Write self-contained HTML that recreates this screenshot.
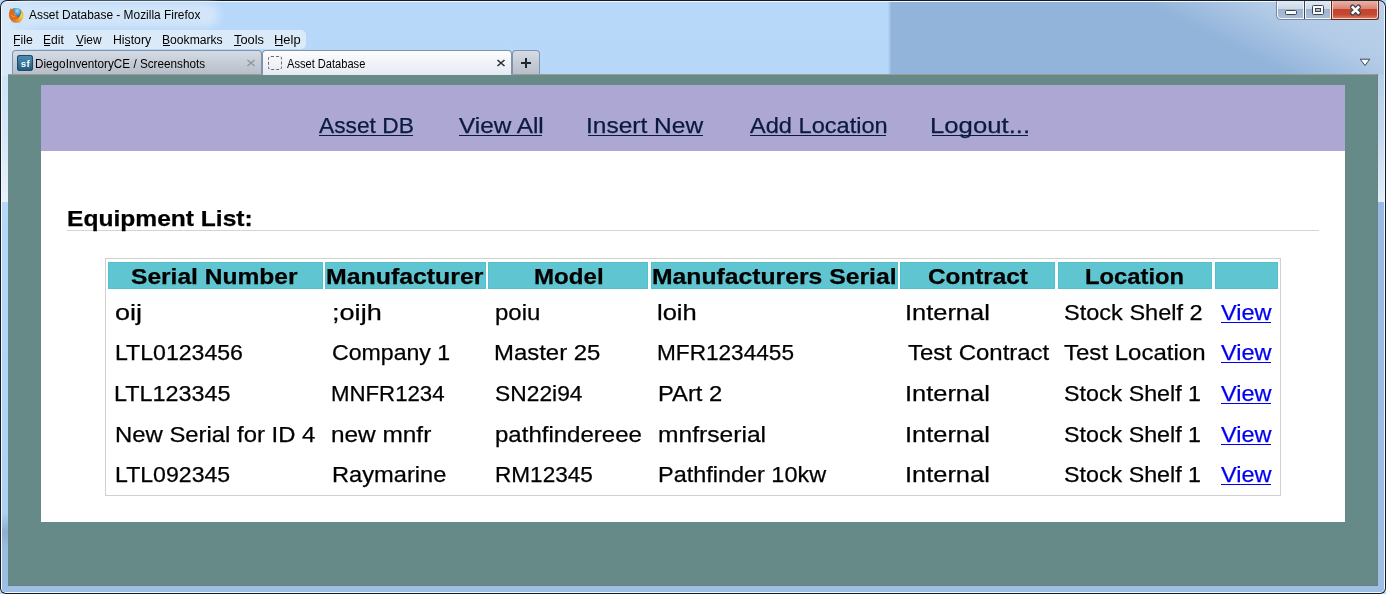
<!DOCTYPE html>
<html><head><meta charset="utf-8"><style>
html,body{margin:0;padding:0;}
body{width:1386px;height:594px;overflow:hidden;position:relative;font-family:"Liberation Sans",sans-serif;background:#b7d7f9;}
.a{position:absolute;}
.t{position:absolute;white-space:nowrap;transform-origin:0 0;-webkit-text-stroke:0.25px currentColor;}
.bm{display:inline-block;width:0;height:0;}
</style></head><body>
<!-- window frame background -->
<div class="a" style="left:0;top:0;width:1386px;height:594px;background:#111c28;border-radius:7px 7px 6px 6px;"></div>
<div class="a" style="left:1px;top:1px;width:1384px;height:592px;background:#f4f9fd;border-radius:6px 6px 5px 5px;"></div>
<div class="a" style="left:2px;top:2px;width:1382px;height:590px;border-radius:5px 5px 4px 4px;overflow:hidden;background:linear-gradient(180deg,#b8d8fa 0,#b7d7f9 200px,#a9c9ee 420px,#9dbfe4 594px);">
  <div class="a" style="left:1376px;top:72px;width:6px;height:128px;background:linear-gradient(180deg,#b6cee9 0,#c4d9ef 60px,#e2eef9 128px);"></div><div class="a" style="left:1376px;top:200px;width:6px;height:390px;background:linear-gradient(180deg,#98bbe3 0,#9dbfe4 390px);"></div>
  <div class="a" style="left:888px;top:0;width:496px;height:72px;background:linear-gradient(26.6deg,#92b4da 0,#92b4da 62%,#b3cbe7 80%,#bcd2ea 100%);"></div>
  <div class="a" style="left:886px;top:0;width:4px;height:72px;background:linear-gradient(90deg,#b5d6f8,#8caed6);"></div>
  <div class="a" style="left:0;top:0;width:40px;height:74px;background:linear-gradient(90deg,#d8e8f8 0,#d8e8f8 6px,rgba(184,216,250,0) 40px);"></div><div class="a" style="left:0;top:74px;width:6px;height:128px;background:linear-gradient(180deg,#cfe3f7 0,#d6e7f8 60px,#eaf2fb 128px);"></div><div class="a" style="left:0;top:200px;width:6px;height:390px;background:linear-gradient(180deg,#b7d7f9 0,#afd0f5 310px,#8fadd0 330px,#9bbbe0 345px,#9dbfe4 390px);"></div>
</div>
<!-- title glow -->
<div class="a" style="left:14px;top:3px;width:205px;height:24px;border-radius:12px;background:#d3e6f9;filter:blur(4px);"></div>
<!-- firefox icon -->
<svg class="a" style="left:8px;top:7px" width="16" height="16" viewBox="0 0 16 16">
  <defs>
    <radialGradient id="or" cx="0.8" cy="0.5" r="0.85"><stop offset="0" stop-color="#ffd84a"/><stop offset="0.35" stop-color="#f7a92e"/><stop offset="1" stop-color="#cf4c18"/></radialGradient>
    <radialGradient id="bl" cx="0.55" cy="0.3" r="0.7"><stop offset="0" stop-color="#9be6fb"/><stop offset="0.6" stop-color="#3d94d6"/><stop offset="1" stop-color="#1b4f9a"/></radialGradient>
  </defs>
  <ellipse cx="8.3" cy="15.3" rx="5" ry="0.7" fill="#8ea9c4" opacity="0.5"/>
  <circle cx="8.3" cy="8.4" r="7.2" fill="url(#or)"/>
  <path d="M4.5 1.8 C7 0.4 10.8 0.6 12.6 2.8 C13.6 4.4 13.2 7.6 11.6 9.4 C10.2 10.8 8 11 7 9.8 C7.8 9 8.2 8.2 7.8 7.2 C6.8 7.4 5.8 6.8 6 5.8 C5.2 5.2 4.6 3.6 4.5 1.8 Z" fill="url(#bl)"/>
  <path d="M1.1 7.2 C1.1 4.6 1.8 2.3 2.9 0.9 C3.3 2 4 2.6 5 2.5 C6.2 3.2 7 4.3 6.8 5.4 C6 5.4 5.4 5.9 5.6 6.7 C6.2 7.6 7.2 8.3 8.2 8.1 C8.8 9.5 10.2 10.3 11.6 9.7 C10.6 11.8 8.6 12.8 6.6 12.6 C3.4 12.3 1.1 10.2 1.1 7.2 Z" fill="#e06a1c"/>
  <path d="M3 8 C4.2 9.2 5.8 9.8 7.3 9.7" stroke="#f6b545" stroke-width="0.9" fill="none" opacity="0.8"/>
</svg>
<!-- window controls -->
<svg class="a" style="left:1276px;top:0" width="104" height="21" viewBox="0 0 104 21">
  <defs>
    <linearGradient id="bg1" x1="0" y1="0" x2="0" y2="1"><stop offset="0" stop-color="#e2eaf4"/><stop offset="0.45" stop-color="#ccd9e9"/><stop offset="0.47" stop-color="#9eb3ce"/><stop offset="1" stop-color="#a9bdd7"/></linearGradient>
    <linearGradient id="bg2" x1="0" y1="0" x2="0" y2="1"><stop offset="0" stop-color="#eeb0a4"/><stop offset="0.45" stop-color="#d98676"/><stop offset="0.47" stop-color="#c5422b"/><stop offset="0.8" stop-color="#c24a33"/><stop offset="1" stop-color="#d2765f"/></linearGradient>
  </defs>
  <path d="M0.5 0 V15.5 Q0.5 19.5 4.5 19.5 H102.5 V0" fill="#3b4757"/>
  <path d="M1 0 H28 V19 H4.5 Q1 19 1 15.5 Z" fill="#f2f6fb"/>
  <path d="M2 1 H27 V18 H5 Q2 18 2 15 Z" fill="url(#bg1)"/>
  <rect x="28" y="0" width="1" height="19" fill="#3b4757"/>
  <rect x="29" y="0" width="26" height="19" fill="#f2f6fb"/>
  <rect x="30" y="1" width="24" height="17" fill="url(#bg1)"/>
  <rect x="55" y="0" width="1" height="20" fill="#6e2414"/>
  <path d="M55 0 H103 V16 Q103 20 99 20 H55 Z" fill="#6e2414"/>
  <path d="M56 0 H102 V16 Q102 19 99 19 H56 Z" fill="#f4d2c8"/>
  <path d="M57 1 H101 V15.5 Q101 18 98.5 18 H57 Z" fill="url(#bg2)"/>
  <rect x="9.5" y="10.5" width="11" height="4" rx="1" fill="#fbfbfb" stroke="#3b4553" stroke-width="1"/>
  <rect x="36.5" y="5.5" width="11" height="9" rx="1" fill="#fbfbfb" stroke="#3b4553" stroke-width="1"/>
  <rect x="39.5" y="8.5" width="5" height="3" fill="#a9bdd6" stroke="#3b4553" stroke-width="1"/>
  <rect x="0" y="0" width="104" height="1" fill="#1b2633"/>
  <path d="M76.5 7 L82.5 13 M82.5 7 L76.5 13" stroke="#3c4552" stroke-width="5" stroke-linecap="round"/>
  <path d="M76.8 7.3 L82.2 12.7 M82.2 7.3 L76.8 12.7" stroke="#fff" stroke-width="2.6" stroke-linecap="square"/>
</svg>
<!-- menubar -->
<div class="a" style="left:8px;top:30px;width:298px;height:19px;border-radius:5px;background:#dbeaf9;"></div>
<!-- tabs -->
<div class="a" style="left:12px;top:50px;width:250px;height:25px;border-radius:4px 4px 0 0;background:#7f93ab;"></div>
<div class="a" style="left:13px;top:51px;width:248px;height:23px;border-radius:3px 3px 0 0;background:linear-gradient(180deg,#d6dce5 0,#c6ccd6 50%,#b8bfca 100%);"></div>
<div class="a" style="left:262px;top:50px;width:250px;height:25px;border-radius:4px 4px 0 0;background:#7f93ab;"></div>
<div class="a" style="left:263px;top:51px;width:248px;height:24px;border-radius:3px 3px 0 0;background:linear-gradient(180deg,#fdfdfe 0,#eef1f7 60%,#e6ebf3 100%);"></div>
<div class="a" style="left:512px;top:50px;width:28px;height:25px;border-radius:4px 4px 0 0;background:#7f93ab;"></div>
<div class="a" style="left:513px;top:51px;width:26px;height:23px;border-radius:3px 3px 0 0;background:linear-gradient(180deg,#d6dce5 0,#c6ccd6 50%,#b8bfca 100%);"></div>
<!-- sf icon -->
<div class="a" style="left:17px;top:55px;width:16px;height:16px;border-radius:3px;background:linear-gradient(180deg,#4f8fb6,#22587c);box-shadow:inset 0 0 0 1px #1d4a69;"></div>
<div class="a" style="left:18px;top:58px;width:15px;text-align:center;font:bold 9.5px/11px 'Liberation Sans',sans-serif;color:#fff;letter-spacing:0.6px;">sf</div>
<!-- dashed favicon -->
<div class="a" style="left:268px;top:56px;width:12px;height:12px;border:1px dashed #6a6a6a;border-radius:3px;"></div>
<!-- tab close -->
<svg class="a" style="left:246px;top:59px" width="10" height="8" viewBox="0 0 10 8"><path d="M1.5 1 L8.5 7 M8.5 1 L1.5 7" stroke="#8f949b" stroke-width="1.4"/></svg>
<svg class="a" style="left:496px;top:59px" width="10" height="8" viewBox="0 0 10 8"><path d="M1.5 1 L8.5 7 M8.5 1 L1.5 7" stroke="#2b2f35" stroke-width="1.6"/></svg>
<!-- new tab plus -->
<div class="a" style="left:521px;top:62px;width:10px;height:2px;background:#1f262d;"></div>
<div class="a" style="left:525px;top:58px;width:2px;height:10px;background:#1f262d;"></div>
<!-- dropdown -->
<svg class="a" style="left:1359px;top:58px" width="12" height="9" viewBox="0 0 12 9"><path d="M1.2 1.2 L10.8 1.2 L6 7.5 Z" fill="#fff" stroke="#3a4656" stroke-width="1"/></svg>
<!-- content area -->
<div class="a" style="left:8px;top:74px;width:1370px;height:512px;background:#668a87;"></div>
<div class="a" style="left:8px;top:74px;width:1370px;height:1px;background:#9e9a96;"></div>
<div class="a" style="left:1377px;top:74px;width:1px;height:512px;background:#6f7f86;"></div>
<div class="a" style="left:8px;top:585px;width:1370px;height:1px;background:#677e88;"></div>
<!-- page -->
<div class="a" style="left:41px;top:85px;width:1304px;height:66px;background:#ada7d4;"></div>
<div class="a" style="left:41px;top:151px;width:1304px;height:371px;background:#fff;"></div>
<div class="a" style="left:67px;top:230px;width:1252px;height:1px;background:#d4d4d4;"></div>
<div class="a" style="left:105px;top:258px;width:1174px;height:236px;border:1px solid #d0d0d0;"></div>
<div class="a" style="left:108px;top:262px;width:215px;height:27px;background:#5fc5d1;box-shadow:inset 0 0 0 1px #53c0cd;"></div>
<div class="a" style="left:325px;top:262px;width:161px;height:27px;background:#5fc5d1;box-shadow:inset 0 0 0 1px #53c0cd;"></div>
<div class="a" style="left:488px;top:262px;width:160px;height:27px;background:#5fc5d1;box-shadow:inset 0 0 0 1px #53c0cd;"></div>
<div class="a" style="left:651px;top:262px;width:247px;height:27px;background:#5fc5d1;box-shadow:inset 0 0 0 1px #53c0cd;"></div>
<div class="a" style="left:900px;top:262px;width:155px;height:27px;background:#5fc5d1;box-shadow:inset 0 0 0 1px #53c0cd;"></div>
<div class="a" style="left:1058px;top:262px;width:154px;height:27px;background:#5fc5d1;box-shadow:inset 0 0 0 1px #53c0cd;"></div>
<div class="a" style="left:1215px;top:262px;width:63px;height:27px;background:#5fc5d1;box-shadow:inset 0 0 0 1px #53c0cd;"></div>
<div class="a" style="left:263px;top:74px;width:248px;height:1px;background:#e4e9f1;"></div>

<div class="t" style="left:29.40px;top:9.00px;font-size:12.5px;line-height:12.5px;font-weight:400;color:#000;-webkit-text-stroke:0;transform:scaleX(0.9523)">Asset Database - Mozilla Firefox<span class="bm"></span></div>
<div class="t" style="left:13.10px;top:34.00px;font-size:12.5px;line-height:12.5px;font-weight:400;color:#000;-webkit-text-stroke:0;transform:scaleX(0.9839)">File<span class="bm"></span></div>
<div class="t" style="left:43.15px;top:34.00px;font-size:12.5px;line-height:12.5px;font-weight:400;color:#000;-webkit-text-stroke:0;transform:scaleX(0.9689)">Edit<span class="bm"></span></div>
<div class="t" style="left:76.21px;top:34.00px;font-size:12.5px;line-height:12.5px;font-weight:400;color:#000;-webkit-text-stroke:0;transform:scaleX(0.9506)">View<span class="bm"></span></div>
<div class="t" style="left:113.46px;top:34.00px;font-size:12.5px;line-height:12.5px;font-weight:400;color:#000;-webkit-text-stroke:0;transform:scaleX(0.9809)">History<span class="bm"></span></div>
<div class="t" style="left:162.07px;top:34.00px;font-size:12.5px;line-height:12.5px;font-weight:400;color:#000;-webkit-text-stroke:0;transform:scaleX(0.9705)">Bookmarks<span class="bm"></span></div>
<div class="t" style="left:234.10px;top:34.00px;font-size:12.5px;line-height:12.5px;font-weight:400;color:#000;-webkit-text-stroke:0;transform:scaleX(1.0277)">Tools<span class="bm"></span></div>
<div class="t" style="left:274.02px;top:34.00px;font-size:12.5px;line-height:12.5px;font-weight:400;color:#000;-webkit-text-stroke:0;transform:scaleX(1.0342)">Help<span class="bm"></span></div>
<div class="t" style="left:35.48px;top:58.00px;font-size:12.5px;line-height:12.5px;font-weight:400;color:#000;-webkit-text-stroke:0;transform:scaleX(0.9379)">DiegoInventoryCE / Screenshots<span class="bm"></span></div>
<div class="t" style="left:286.70px;top:58.00px;font-size:12.5px;line-height:12.5px;font-weight:400;color:#000;-webkit-text-stroke:0;transform:scaleX(0.8873)">Asset Database<span class="bm"></span></div>
<div class="t" style="left:319.10px;top:115.01px;font-size:22.5px;line-height:22.5px;font-weight:400;color:#0b1a40;transform:scaleX(1.0112)">Asset DB<span class="bm"></span></div>
<div class="t" style="left:459.21px;top:115.01px;font-size:22.5px;line-height:22.5px;font-weight:400;color:#0b1a40;transform:scaleX(1.0811)">View All<span class="bm"></span></div>
<div class="t" style="left:585.91px;top:115.01px;font-size:22.5px;line-height:22.5px;font-weight:400;color:#0b1a40;transform:scaleX(1.0887)">Insert New<span class="bm"></span></div>
<div class="t" style="left:750.21px;top:115.01px;font-size:22.5px;line-height:22.5px;font-weight:400;color:#0b1a40;transform:scaleX(1.0485)">Add Location<span class="bm"></span></div>
<div class="t" style="left:929.87px;top:115.01px;font-size:22.5px;line-height:22.5px;font-weight:400;color:#0b1a40;transform:scaleX(1.1429)">Logout...<span class="bm"></span></div>
<div class="t" style="left:66.90px;top:208.01px;font-size:22.5px;line-height:22.5px;font-weight:700;color:#000;transform:scaleX(1.0925)">Equipment List:<span class="bm"></span></div>
<div class="t" style="left:131.44px;top:266.01px;font-size:22.5px;line-height:22.5px;font-weight:700;color:#000;transform:scaleX(1.0916)">Serial Number<span class="bm"></span></div>
<div class="t" style="left:326.39px;top:266.01px;font-size:22.5px;line-height:22.5px;font-weight:700;color:#000;transform:scaleX(1.1048)">Manufacturer<span class="bm"></span></div>
<div class="t" style="left:533.62px;top:266.01px;font-size:22.5px;line-height:22.5px;font-weight:700;color:#000;transform:scaleX(1.0706)">Model<span class="bm"></span></div>
<div class="t" style="left:652.40px;top:266.01px;font-size:22.5px;line-height:22.5px;font-weight:700;color:#000;transform:scaleX(1.0986)">Manufacturers Serial<span class="bm"></span></div>
<div class="t" style="left:927.86px;top:266.01px;font-size:22.5px;line-height:22.5px;font-weight:700;color:#000;transform:scaleX(1.0797)">Contract<span class="bm"></span></div>
<div class="t" style="left:1084.85px;top:266.01px;font-size:22.5px;line-height:22.5px;font-weight:700;color:#000;transform:scaleX(1.0566)">Location<span class="bm"></span></div>
<div class="t" style="left:115.47px;top:302.01px;font-size:22.5px;line-height:22.5px;font-weight:400;color:#000;transform:scaleX(1.2017)">oij<span class="bm"></span></div>
<div class="t" style="left:331.76px;top:302.01px;font-size:22.5px;line-height:22.5px;font-weight:400;color:#000;transform:scaleX(1.2053)">;oijh<span class="bm"></span></div>
<div class="t" style="left:495.03px;top:302.01px;font-size:22.5px;line-height:22.5px;font-weight:400;color:#000;transform:scaleX(1.0669)">poiu<span class="bm"></span></div>
<div class="t" style="left:656.98px;top:302.01px;font-size:22.5px;line-height:22.5px;font-weight:400;color:#000;transform:scaleX(1.1349)">loih<span class="bm"></span></div>
<div class="t" style="left:905.08px;top:302.01px;font-size:22.5px;line-height:22.5px;font-weight:400;color:#000;transform:scaleX(1.1300)">Internal<span class="bm"></span></div>
<div class="t" style="left:1063.55px;top:302.01px;font-size:22.5px;line-height:22.5px;font-weight:400;color:#000;transform:scaleX(1.0458)">Stock Shelf 2<span class="bm"></span></div>
<div class="t" style="left:1221.00px;top:302.01px;font-size:22.5px;line-height:22.5px;font-weight:400;color:#0000ee;transform:scaleX(1.0437)">View<span class="bm"></span></div>
<div class="t" style="left:114.60px;top:342.01px;font-size:22.5px;line-height:22.5px;font-weight:400;color:#000;transform:scaleX(1.0259)">LTL0123456<span class="bm"></span></div>
<div class="t" style="left:332.27px;top:342.01px;font-size:22.5px;line-height:22.5px;font-weight:400;color:#000;transform:scaleX(1.0269)">Company 1<span class="bm"></span></div>
<div class="t" style="left:494.30px;top:342.01px;font-size:22.5px;line-height:22.5px;font-weight:400;color:#000;transform:scaleX(1.0634)">Master 25<span class="bm"></span></div>
<div class="t" style="left:657.22px;top:342.01px;font-size:22.5px;line-height:22.5px;font-weight:400;color:#000;transform:scaleX(1.0048)">MFR1234455<span class="bm"></span></div>
<div class="t" style="left:908.07px;top:342.01px;font-size:22.5px;line-height:22.5px;font-weight:400;color:#000;transform:scaleX(1.0658)">Test Contract<span class="bm"></span></div>
<div class="t" style="left:1064.06px;top:342.01px;font-size:22.5px;line-height:22.5px;font-weight:400;color:#000;transform:scaleX(1.0677)">Test Location<span class="bm"></span></div>
<div class="t" style="left:1221.00px;top:342.01px;font-size:22.5px;line-height:22.5px;font-weight:400;color:#0000ee;transform:scaleX(1.0437)">View<span class="bm"></span></div>
<div class="t" style="left:114.20px;top:383.01px;font-size:22.5px;line-height:22.5px;font-weight:400;color:#000;transform:scaleX(1.0386)">LTL123345<span class="bm"></span></div>
<div class="t" style="left:331.22px;top:383.01px;font-size:22.5px;line-height:22.5px;font-weight:400;color:#000;transform:scaleX(0.9871)">MNFR1234<span class="bm"></span></div>
<div class="t" style="left:494.76px;top:383.01px;font-size:22.5px;line-height:22.5px;font-weight:400;color:#000;transform:scaleX(1.0141)">SN22i94<span class="bm"></span></div>
<div class="t" style="left:657.51px;top:383.01px;font-size:22.5px;line-height:22.5px;font-weight:400;color:#000;transform:scaleX(1.0561)">PArt 2<span class="bm"></span></div>
<div class="t" style="left:905.08px;top:383.01px;font-size:22.5px;line-height:22.5px;font-weight:400;color:#000;transform:scaleX(1.1300)">Internal<span class="bm"></span></div>
<div class="t" style="left:1063.66px;top:383.01px;font-size:22.5px;line-height:22.5px;font-weight:400;color:#000;transform:scaleX(1.0337)">Stock Shelf 1<span class="bm"></span></div>
<div class="t" style="left:1221.00px;top:383.01px;font-size:22.5px;line-height:22.5px;font-weight:400;color:#0000ee;transform:scaleX(1.0437)">View<span class="bm"></span></div>
<div class="t" style="left:114.63px;top:424.01px;font-size:22.5px;line-height:22.5px;font-weight:400;color:#000;transform:scaleX(1.0610)">New Serial for ID 4<span class="bm"></span></div>
<div class="t" style="left:330.91px;top:424.01px;font-size:22.5px;line-height:22.5px;font-weight:400;color:#000;transform:scaleX(1.0835)">new mnfr<span class="bm"></span></div>
<div class="t" style="left:495.23px;top:424.01px;font-size:22.5px;line-height:22.5px;font-weight:400;color:#000;transform:scaleX(1.0672)">pathfindereee<span class="bm"></span></div>
<div class="t" style="left:658.37px;top:424.01px;font-size:22.5px;line-height:22.5px;font-weight:400;color:#000;transform:scaleX(1.0938)">mnfrserial<span class="bm"></span></div>
<div class="t" style="left:905.08px;top:424.01px;font-size:22.5px;line-height:22.5px;font-weight:400;color:#000;transform:scaleX(1.1300)">Internal<span class="bm"></span></div>
<div class="t" style="left:1063.66px;top:424.01px;font-size:22.5px;line-height:22.5px;font-weight:400;color:#000;transform:scaleX(1.0337)">Stock Shelf 1<span class="bm"></span></div>
<div class="t" style="left:1221.00px;top:424.01px;font-size:22.5px;line-height:22.5px;font-weight:400;color:#0000ee;transform:scaleX(1.0437)">View<span class="bm"></span></div>
<div class="t" style="left:114.70px;top:464.01px;font-size:22.5px;line-height:22.5px;font-weight:400;color:#000;transform:scaleX(1.0267)">LTL092345<span class="bm"></span></div>
<div class="t" style="left:332.40px;top:464.01px;font-size:22.5px;line-height:22.5px;font-weight:400;color:#000;transform:scaleX(1.0512)">Raymarine<span class="bm"></span></div>
<div class="t" style="left:494.68px;top:464.01px;font-size:22.5px;line-height:22.5px;font-weight:400;color:#000;transform:scaleX(1.0029)">RM12345<span class="bm"></span></div>
<div class="t" style="left:657.63px;top:464.01px;font-size:22.5px;line-height:22.5px;font-weight:400;color:#000;transform:scaleX(1.0417)">Pathfinder 10kw<span class="bm"></span></div>
<div class="t" style="left:905.08px;top:464.01px;font-size:22.5px;line-height:22.5px;font-weight:400;color:#000;transform:scaleX(1.1300)">Internal<span class="bm"></span></div>
<div class="t" style="left:1063.66px;top:464.01px;font-size:22.5px;line-height:22.5px;font-weight:400;color:#000;transform:scaleX(1.0337)">Stock Shelf 1<span class="bm"></span></div>
<div class="t" style="left:1221.00px;top:464.01px;font-size:22.5px;line-height:22.5px;font-weight:400;color:#0000ee;transform:scaleX(1.0437)">View<span class="bm"></span></div>
<!-- menu mnemonics -->
<div class="a" style="left:14px;top:45px;width:6px;height:1px;background:#000;"></div>
<div class="a" style="left:44px;top:45px;width:6px;height:1px;background:#000;"></div>
<div class="a" style="left:76px;top:45px;width:7px;height:1px;background:#000;"></div>
<div class="a" style="left:125px;top:45px;width:5px;height:1px;background:#000;"></div>
<div class="a" style="left:163px;top:45px;width:7px;height:1px;background:#000;"></div>
<div class="a" style="left:234px;top:45px;width:7px;height:1px;background:#000;"></div>
<div class="a" style="left:275px;top:45px;width:8px;height:1px;background:#000;"></div>
<!-- nav underlines -->
<div class="a" style="left:319px;top:135px;width:94px;height:1px;background:#0b1a40;"></div>
<div class="a" style="left:459px;top:135px;width:83px;height:1px;background:#0b1a40;"></div>
<div class="a" style="left:588px;top:135px;width:115px;height:1px;background:#0b1a40;"></div>
<div class="a" style="left:750px;top:135px;width:136px;height:1px;background:#0b1a40;"></div>
<div class="a" style="left:932px;top:135px;width:96px;height:1px;background:#0b1a40;"></div>
<!-- view underlines -->
<div class="a" style="left:1221px;top:322px;width:50px;height:1px;background:#0000f0;"></div>
<div class="a" style="left:1221px;top:362px;width:50px;height:1px;background:#0000f0;"></div>
<div class="a" style="left:1221px;top:403px;width:50px;height:1px;background:#0000f0;"></div>
<div class="a" style="left:1221px;top:444px;width:50px;height:1px;background:#0000f0;"></div>
<div class="a" style="left:1221px;top:484px;width:50px;height:1px;background:#0000f0;"></div>

</body></html>
